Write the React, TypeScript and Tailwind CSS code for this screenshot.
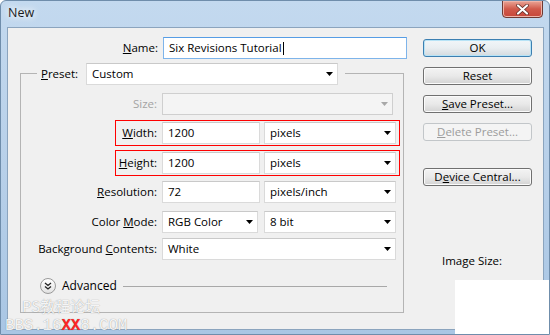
import type { ReactNode } from 'react'

function Arrow({ muted = false }: { muted?: boolean }) {
  return (
    <svg width="7" height="4" viewBox="0 0 7 4" className="shrink-0">
      <path d="M0 0h7L3.5 4z" fill={muted ? '#a8a8a8' : '#000'} />
    </svg>
  )
}

function Field({ className, children }: { className: string; children?: ReactNode }) {
  return (
    <div className={`h-[22px] shrink-0 border border-[#dadada] border-t-[#c9c9c9] bg-white pl-[5px] flex items-center ${className}`}>
      {children}
    </div>
  )
}

function Select({ className, value }: { className: string; value: string }) {
  return (
    <div className={`h-[22px] shrink-0 border border-[#dadada] border-t-[#c9c9c9] bg-white pl-[5px] pr-[4px] flex items-center justify-between ${className}`}>
      <span>{value}</span>
      <Arrow />
    </div>
  )
}

function Btn({ children, mt, variant = 'normal' }: { children: ReactNode; mt: string; variant?: 'normal' | 'default' | 'disabled' }) {
  const look =
    variant === 'default'
      ? 'border-[#3c7fb1] shadow-[inset_0_0_0_1px_#b7e3f6] bg-gradient-to-b from-[#f1f6f9] via-[#e9eef1] to-[#d3dade]'
      : variant === 'disabled'
        ? 'border-[#c2c6c9] bg-[#f4f4f4] text-[#9c9c9c]'
        : 'border-[#707070] shadow-[inset_0_0_0_1px_#fbfbfb] bg-gradient-to-b from-[#f3f3f3] via-[#e9e9e9] to-[#d3d3d3]'
  return (
    <div className={`h-[18px] w-[109px] rounded-[3px] border flex items-center justify-center leading-none ${look} ${mt}`}>
      {children}
    </div>
  )
}

function Label({ className, children }: { className: string; children: ReactNode }) {
  return <div className={`shrink-0 text-right ${className}`}>{children}</div>
}

export default function App() {
  return (
    <div className="relative w-[550px] h-[335px] overflow-hidden rounded-t-[6px] border border-[#6f8dab] bg-gradient-to-b from-[#c3d9ef] via-[#b8d0e9] to-[#a9c6e4] font-['Open_Sans',sans-serif] text-[11.5px] leading-[16px] text-black flex flex-col">
      {/* title bar */}
      <div className="h-[26px] shrink-0 flex items-start">
        <div className="pl-[7px] pt-[4px] text-[12.5px] leading-[16px] text-[#1b1b1b] [text-shadow:0_0_8px_#ffffff,0_0_6px_#ffffff]">
          New
        </div>
        <div className="ml-auto mr-[6px] -mt-px h-[18px] w-[41px] rounded-b-[4px] border border-[#6e3a34] bg-gradient-to-b from-[#e9a597] via-[#d0594a] to-[#c7473a] shadow-[inset_0_0_0_1px_#f0b4a8] flex items-center justify-center">
          <svg width="13" height="11" viewBox="0 0 13 11">
            <path d="M2 1.5l9 8M11 1.5l-9 8" stroke="#5a2a24" strokeWidth="3.6" strokeLinecap="round" />
            <path d="M2 1.5l9 8M11 1.5l-9 8" stroke="#fff" strokeWidth="2.2" strokeLinecap="round" />
          </svg>
        </div>
      </div>

      {/* client area */}
      <div className="ml-[6px] w-[537px] h-[303px] shrink-0 border border-[#8ba4be] bg-[#f0f0f0] flex">
        {/* form */}
        <div className="w-[415px] shrink-0 flex flex-col">
          <div className="mt-[9px] flex items-center">
            <Label className="w-[150px]">
              <u>N</u>ame:
            </Label>
            <div className="ml-[5px] h-[22px] w-[244px] border border-[#7eb4ea] border-t-[#569de5] bg-white pl-[5px] flex items-center">
              <span>Six Revisions Tutorial</span>
              <span className="ml-px h-[13px] w-px bg-black" />
            </div>
          </div>

          {/* preset group */}
          <div className="ml-[12px] mt-[14px] w-[384px] h-[240px] border border-[#b4b4b4] flex flex-col">
            <div className="-mt-[11px] ml-[16px] w-fit bg-[#f0f0f0] pl-[4px] pr-[7px] flex items-center">
              <div className="w-[45px]">
                <u>P</u>reset:
              </div>
              <Select className="w-[252px]" value="Custom" />
            </div>

            <div className="mt-[8px] flex items-center">
              <Label className="w-[136px] text-[#a3a3a3]">Size:</Label>
              <div className="ml-[5px] h-[22px] w-[231px] border border-[#cfcfcf] bg-[#f4f4f4] pr-[4px] flex items-center justify-end">
                <Arrow muted />
              </div>
            </div>

            <div className="mt-[5px] ml-[94px] w-[285px] border border-[#ff0000] py-px pr-[3px] flex items-center">
              <Label className="w-[41px]">
                <u>W</u>idth:
              </Label>
              <Field className="ml-[5px] w-[98px]">1200</Field>
              <Select className="ml-[4px] w-[132px]" value="pixels" />
            </div>

            <div className="mt-[4px] ml-[94px] w-[285px] border border-[#ff0000] py-px pr-[3px] flex items-center">
              <Label className="w-[41px]">
                <u>H</u>eight:
              </Label>
              <Field className="ml-[5px] w-[98px]">1200</Field>
              <Select className="ml-[4px] w-[132px]" value="pixels" />
            </div>

            <div className="mt-[5px] flex items-center">
              <Label className="w-[136px]">
                <u>R</u>esolution:
              </Label>
              <Field className="ml-[5px] w-[98px]">72</Field>
              <Select className="ml-[4px] w-[132px]" value="pixels/inch" />
            </div>

            <div className="mt-[8px] flex items-center">
              <Label className="w-[136px]">
                Color <u>M</u>ode:
              </Label>
              <Select className="ml-[5px] w-[96px]" value="RGB Color" />
              <Select className="ml-[6px] w-[132px]" value="8 bit" />
            </div>

            <div className="mt-[5px] flex items-center">
              <Label className="w-[136px]">
                Background <u>C</u>ontents:
              </Label>
              <Select className="ml-[5px] w-[234px]" value="White" />
            </div>

            <div className="mt-[18px] ml-[19px] mr-[16px] flex items-center">
              <div className="h-[16px] w-[16px] rounded-full border border-[#9a9a9a] bg-gradient-to-b from-white to-[#e2e2e2] flex items-center justify-center">
                <svg width="8" height="8" viewBox="0 0 8 8">
                  <path d="M1 1l3 2.5L7 1M1 4.5L4 7l3-2.5" stroke="#222" strokeWidth="1.3" fill="none" />
                </svg>
              </div>
              <span className="ml-[6px] text-[12px] leading-[14px]">Advanced</span>
              <div className="ml-[6px] h-px flex-1 bg-[#a8a8a8]" />
            </div>
          </div>
        </div>

        {/* buttons */}
        <div className="flex flex-col">
          <Btn mt="mt-[11px]" variant="default">
            OK
          </Btn>
          <Btn mt="mt-[10px]">Reset</Btn>
          <Btn mt="mt-[10px]">
            <span>
              <u>S</u>ave Preset...
            </span>
          </Btn>
          <Btn mt="mt-[10px]" variant="disabled">
            <span>
              <u>D</u>elete Preset...
            </span>
          </Btn>
          <Btn mt="mt-[27px]">
            <span>
              D<u>e</u>vice Central...
            </span>
          </Btn>
          <div className="mt-[67px] ml-[19px] leading-[16px]">Image Size:</div>
        </div>
      </div>

      {/* watermark overlay */}
      <div className="absolute left-[454px] top-[279px] h-[56px] w-[96px] bg-white" />
      <div className="absolute left-[21px] top-[296px] font-['Noto_Sans_CJK_SC',sans-serif] text-[15px] leading-[17px] text-white/90 [text-shadow:0_0_1px_rgba(0,0,0,0.45)]">
        PS教程论坛
      </div>
      <div className="absolute left-[4px] top-[318px] font-['Liberation_Mono',monospace] text-[16px] leading-[14px] tracking-[-0.2px] text-white/90 [text-shadow:0_0_1px_rgba(0,0,0,0.45)]">
        BBS.16<span className="text-[#ff2424] font-bold">XX</span>8.COM
      </div>
    </div>
  )
}
